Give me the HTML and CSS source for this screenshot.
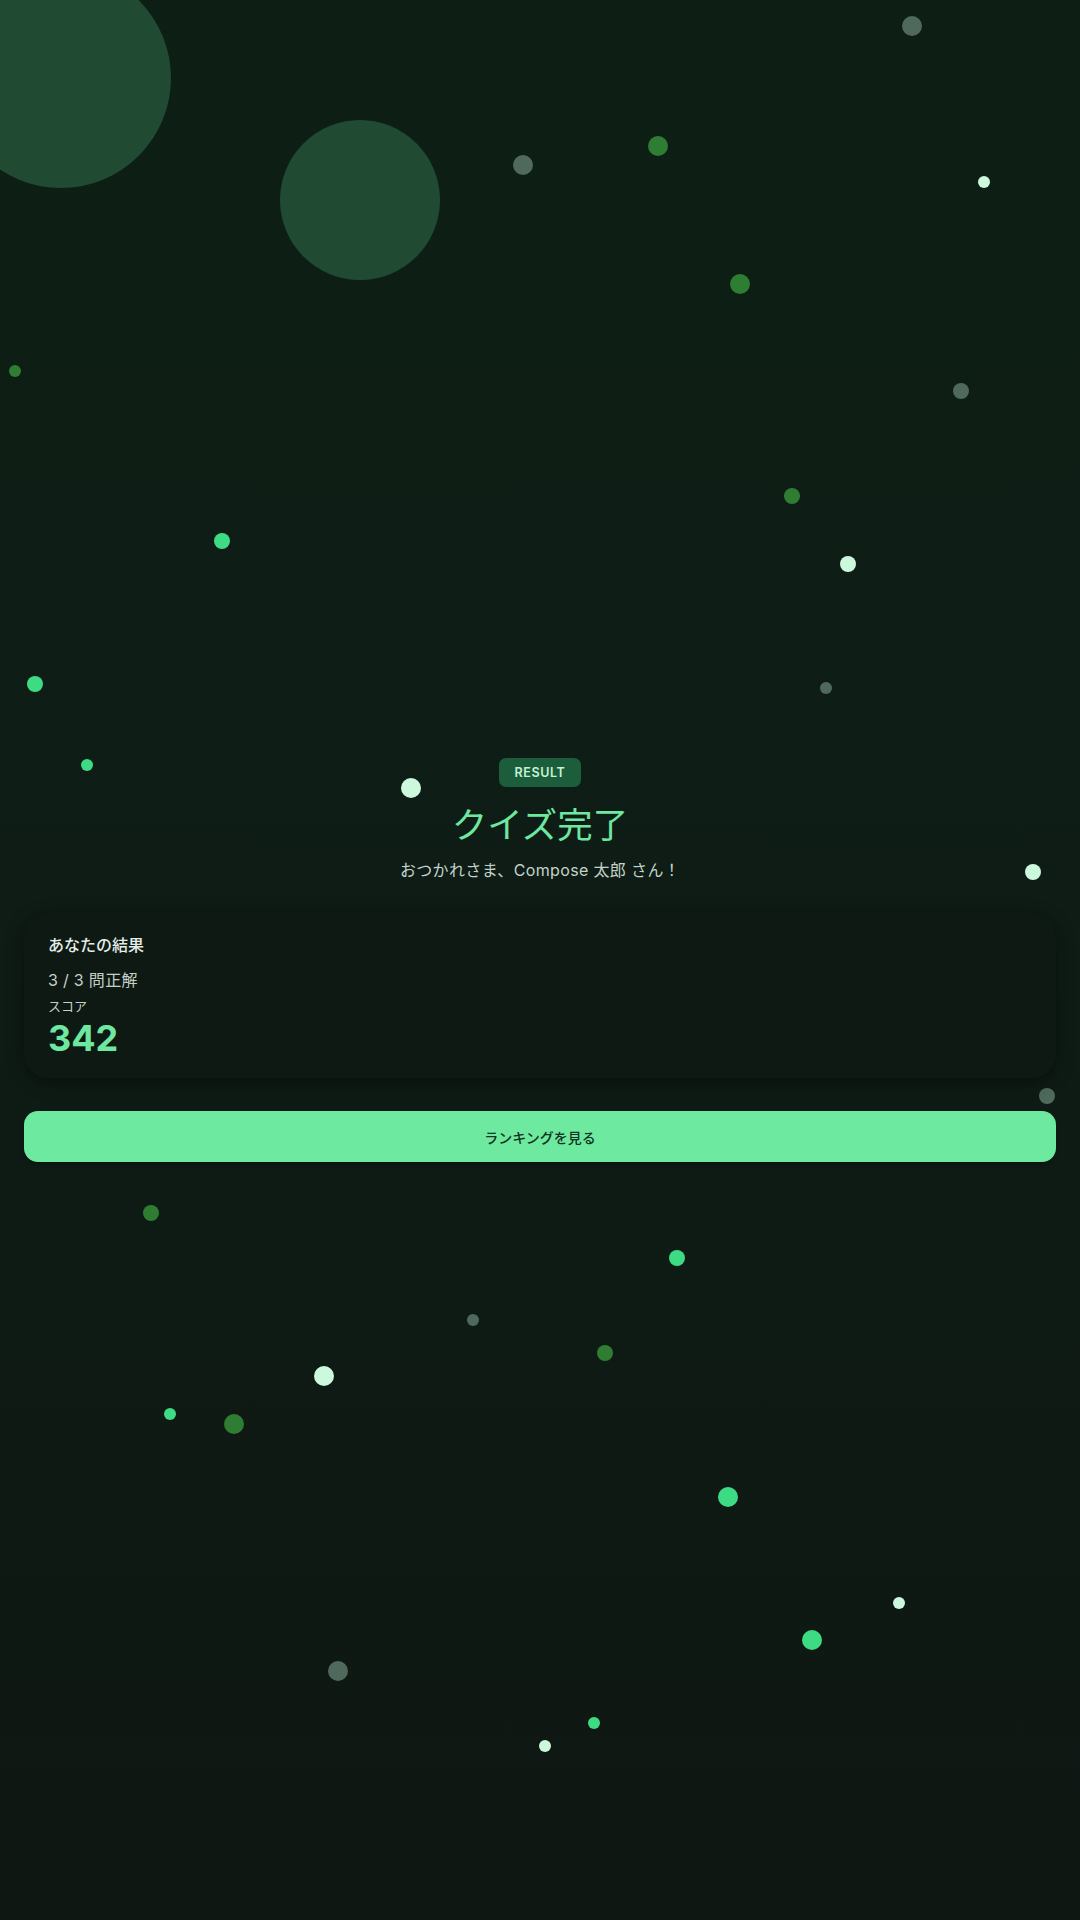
FILE: index.html
```html
<!DOCTYPE html>
<html lang="ja">
<head>
<meta charset="utf-8">
<title>クイズ完了</title>
<link rel="stylesheet" href="styles.css">
</head>
<body>
<div class="screen">
  <svg class="confetti" width="1080" height="1920" viewBox="0 0 1080 1920" aria-hidden="true">
    <circle class="blob" cx="61" cy="78" r="110"/>
    <circle class="blob" cx="360" cy="200" r="80"/>
    <circle class="c-grey" cx="912" cy="26" r="10"/>
    <circle class="c-grey" cx="523" cy="165" r="10"/>
    <circle class="c-dark" cx="658" cy="146" r="10"/>
    <circle class="c-mint" cx="984" cy="182" r="6"/>
    <circle class="c-dark" cx="740" cy="284" r="10"/>
    <circle class="c-dark" cx="15" cy="371" r="6"/>
    <circle class="c-grey" cx="961" cy="391" r="8"/>
    <circle class="c-dark" cx="792" cy="496" r="8"/>
    <circle class="c-bright" cx="222" cy="541" r="8"/>
    <circle class="c-mint" cx="848" cy="564" r="8"/>
    <circle class="c-bright" cx="35" cy="684" r="8"/>
    <circle class="c-grey" cx="826" cy="688" r="6"/>
    <circle class="c-bright" cx="87" cy="765" r="6"/>
    <circle class="c-mint" cx="411" cy="788" r="10"/>
    <circle class="c-mint" cx="1033" cy="872" r="8"/>
    <circle class="c-grey" cx="1047" cy="1096" r="8"/>
    <circle class="c-dark" cx="151" cy="1213" r="8"/>
    <circle class="c-bright" cx="677" cy="1258" r="8"/>
    <circle class="c-grey" cx="473" cy="1320" r="6"/>
    <circle class="c-dark" cx="605" cy="1353" r="8"/>
    <circle class="c-mint" cx="324" cy="1376" r="10"/>
    <circle class="c-bright" cx="170" cy="1414" r="6"/>
    <circle class="c-dark" cx="234" cy="1424" r="10"/>
    <circle class="c-bright" cx="728" cy="1497" r="10"/>
    <circle class="c-mint" cx="899" cy="1603" r="6"/>
    <circle class="c-bright" cx="812" cy="1640" r="10"/>
    <circle class="c-grey" cx="338" cy="1671" r="10"/>
    <circle class="c-bright" cx="594" cy="1723" r="6"/>
    <circle class="c-mint" cx="545" cy="1746" r="6"/>
  </svg>

  <main class="content">
    <div class="badge">RESULT</div>
    <h1 class="title">クイズ完了</h1>
    <p class="subtitle">おつかれさま、Compose 太郎 さん！</p>

    <section class="card">
      <h2 class="card-title">あなたの結果</h2>
      <p class="correct">3 / 3 問正解</p>
      <p class="score-label">スコア</p>
      <p class="score">342</p>
    </section>

    <button class="primary-btn" type="button">ランキングを見る</button>
  </main>
</div>
</body>
</html>
```

FILE: styles.css
```css
* {
  box-sizing: border-box;
}

html, body {
  margin: 0;
  padding: 0;
}

body {
  width: 1080px;
  height: 1920px;
  overflow: hidden;
  font-family: "Inter", "Noto Sans CJK JP", "Noto Sans", sans-serif;
  background: #0e1a14;
}

.screen {
  position: relative;
  width: 1080px;
  height: 1920px;
  background: linear-gradient(180deg, #0d1f15 0%, #0e1c15 50%, #0f1713 100%);
  overflow: hidden;
}

.confetti {
  position: absolute;
  left: 0;
  top: 0;
}

.blob { fill: #214a33; }
.c-grey { fill: #4f6a5c; }
.c-dark { fill: #2e7d32; }
.c-bright { fill: #3ddc84; }
.c-mint { fill: #ccf8de; }

.content {
  position: relative;
  height: 100%;
  padding: 0 24px;
  display: flex;
  flex-direction: column;
  align-items: center;
  justify-content: center;
}

.badge {
  height: 29px;
  padding: 0 16px;
  display: flex;
  align-items: center;
  background: #1c5e3b;
  color: #c3f3d5;
  border-radius: 7px;
  font-size: 12.5px;
  font-weight: 600;
  letter-spacing: 0.6px;
}

.title {
  margin: 12px 0 0;
  font-family: "Noto Sans CJK JP", sans-serif;
  font-size: 35.5px;
  font-weight: 400;
  line-height: 48px;
  color: #6ee7a0;
}

.subtitle {
  margin: 11px 0 0;
  font-size: 16px;
  line-height: 24px;
  color: #c3d3c9;
  letter-spacing: 0.35px;
}

.card {
  align-self: stretch;
  margin-top: 31px;
  padding: 20px 24px 18px;
  background: #0f1914;
  border-radius: 24px;
  box-shadow: 0 4px 18px rgba(0, 0, 0, 0.45);
  display: flex;
  flex-direction: column;
}

.card-title {
  margin: 0;
  font-size: 16px;
  font-weight: 500;
  line-height: 24px;
  color: #e4ede7;
}

.correct {
  margin: 11px 0 0;
  font-size: 16px;
  line-height: 24px;
  color: #c4d0c8;
  letter-spacing: 0.3px;
}

.score-label {
  margin: 4px 0 0;
  font-size: 13px;
  line-height: 20px;
  color: #c4d0c8;
}

.score {
  margin: 0;
  font-size: 36px;
  font-weight: 700;
  line-height: 44px;
  color: #6ee7a0;
  letter-spacing: 0;
}

.primary-btn {
  align-self: stretch;
  margin-top: 33px;
  height: 51px;
  border: none;
  border-radius: 14px;
  background: #6ee9a0;
  color: #123322;
  font-family: "Noto Sans CJK JP", sans-serif;
  font-size: 14px;
  font-weight: 500;
  box-shadow: 0 2px 4px rgba(0, 0, 0, 0.3);
}
```
